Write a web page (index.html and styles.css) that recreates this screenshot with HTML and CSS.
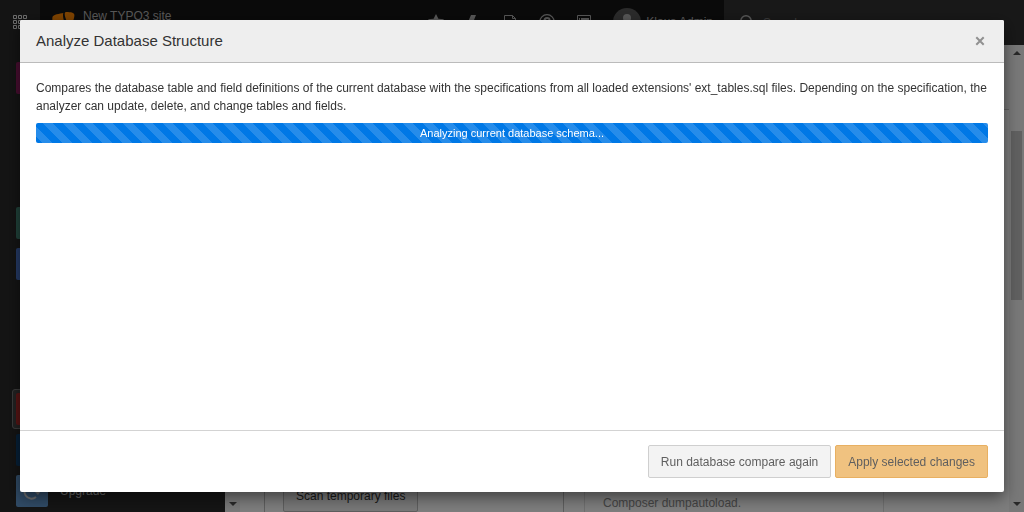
FILE: index.html
```html
<!DOCTYPE html>
<html lang="en">
<head>
<meta charset="utf-8">
<meta name="viewport" content="width=device-width, initial-scale=1">
<title>Analyze Database Structure</title>
<link rel="stylesheet" href="styles.css">
</head>
<body>
<div class="page">
  <header class="topbar">
    <button class="topbar-toggle" type="button" aria-label="Toggle module menu">
      <svg width="16" height="16" viewBox="0 0 16 16" fill="none" stroke="currentColor"><path d="M1.5 1.5h3v3h-3zM6.500 1.500h3v3h-3zM11.500 1.500h3v3h-3zM1.500 6.500h3v3h-3zM6.500 6.500h3v3h-3zM11.500 6.500h3v3h-3zM1.500 11.500h3v3h-3zM6.500 11.500h3v3h-3zM11.500 11.500h3v3h-3z"/></svg>
    </button>
    <a class="site" href="#">
      <svg class="site-logo" width="24" height="24" viewBox="0 0 24 24" fill="#ff8700"><path d="M17 15.500c-.4.100-.7.200-1.100.200-3.300 0-4.900-9-4.900-12 0-1.100.3-1.500.6-1.700C7.600 2.400 1 4 .7 5.500.4 6.200.3 7 .3 7.800 0 11.500 5 22 9.200 22c2 0 5.200-3.200 7.800-6.500M14.500 1c3.900 0 7.900.7 7.900 2.900 0 4.300-2.700 9.600-4.200 9.600-2.500 0-5.500-6.900-5.500-10.400C12.700 1.500 13.300 1 14.500 1"/></svg>
      <span class="site-name">New TYPO3 site</span>
    </a>
    <nav class="tools">
      <button class="tool" type="button" aria-label="Bookmarks"><svg width="16" height="16" viewBox="0 0 16 16" fill="currentColor"><path d="M8 0l2.400 4.700L16 5.300l-4 4 1.100 5.700L8 12.200 2.900 15 4 9.300l-4-4 5.600-.6z"/></svg></button>
      <button class="tool" type="button" aria-label="Flush caches"><svg width="16" height="16" viewBox="0 0 16 16" fill="currentColor"><path d="M6 1h5L9 6h3l-7 9 2-7H3z"/></svg></button>
      <button class="tool" type="button" aria-label="Open documents"><svg width="16" height="16" viewBox="0 0 16 16" fill="none" stroke="currentColor"><path d="M2.500 1.500h8l3 3v10h-11zM10.500 1.500v3h3"/></svg></button>
      <button class="tool" type="button" aria-label="Help"><svg width="16" height="16" viewBox="0 0 16 16" fill="none" stroke="currentColor"><circle cx="8" cy="8" r="7.300" stroke-width="1.300"/><path d="M5.500 6.500C5.500 3 10.700 3.200 10.500 6 10.400 7.700 8 7.800 8 10M8 11.500v1.500" stroke-width="2"/></svg></button>
      <button class="tool" type="button" aria-label="Application information"><svg width="16" height="16" viewBox="0 0 16 16" fill="none" stroke="currentColor"><path d="M1.500 1.500h13v12h-13z"/><path d="M3 5h1M5 5h8M3 8h1M5 8h8M3 11h1M5 11h8" stroke-width="2"/></svg></button>
      <button class="user" type="button">
        <svg width="28" height="28" viewBox="0 0 28 28"><circle cx="14" cy="14" r="14" fill="#575757"/><circle cx="14" cy="10" r="4" fill="#b0b0b0"/><path d="M6 23c0-11 16-11 16 0z" fill="#b0b0b0"/></svg>
        <span>Klaus Admin</span>
      </button>
    </nav>
    <label class="search">
      <svg width="16" height="16" viewBox="0 0 16 16" fill="none" stroke="currentColor" stroke-width="1.500"><circle cx="6" cy="6" r="5.200"/><path d="M10 10l4 4"/></svg>
      <input class="search-input" type="search" placeholder="Search" aria-label="Search">
    </label>
  </header>
  <div class="scaffold">
    <nav class="modules">
      <div class="module"><span class="module-icon pink"></span></div>
      <div class="module group-start"><span class="module-icon teal"></span></div>
      <div class="module"><span class="module-icon blue"></span></div>
      <div class="module active group-start"><span class="module-icon red"></span></div>
      <div class="module"><span class="module-icon navy"></span></div>
      <a class="module" href="#"><span class="module-icon steel"><svg width="32" height="32" viewBox="0 0 32 32" fill="none" stroke="#dddddd" stroke-width="2"><path d="M20 22A7 7 0 1 1 22 14"/><path d="M18 16h7l-3 4z" fill="#dddddd" stroke="none"/></svg></span><span>Upgrade</span></a>
    </nav>
    <div class="scrollbar nav-scroll"><span class="arrow-down"></span></div>
    <main class="content">
      <div class="docheader"></div>
      <div class="cards">
        <section class="card"><button class="card-button" type="button">Scan temporary files</button></section>
        <section class="card muted"><p class="card-text">Composer dumpautoload.</p></section>
      </div>
    </main>
    <div class="scrollbar"><span class="arrow-up"></span><span class="thumb"></span><span class="arrow-down"></span></div>
  </div>
</div>
<div class="backdrop">
  <div class="modal" role="dialog" aria-modal="true" aria-labelledby="modal-title">
    <header class="modal-header">
      <h1 class="modal-title" id="modal-title">Analyze Database Structure</h1>
      <button class="close" type="button" aria-label="Close"><svg width="10" height="10" viewBox="0 0 10 10" stroke="currentColor" stroke-width="2"><path d="M1.300 1.300l7.400 7.400M8.700 1.300L1.300 8.700"/></svg></button>
    </header>
    <div class="modal-body">
      <p class="intro">Compares the database table and field definitions of the current database with the specifications from all loaded extensions' ext_tables.sql files. Depending on the specification, the analyzer can update, delete, and change tables and fields.</p>
      <div class="progress" role="progressbar" aria-label="Analyzing">Analyzing current database schema...</div>
    </div>
    <footer class="modal-footer">
      <button class="btn" type="button" disabled>Run database compare again</button>
      <button class="btn btn-warning" type="button" disabled>Apply selected changes</button>
    </footer>
  </div>
</div>
</body>
</html>
```

FILE: styles.css
```css
* { box-sizing: border-box; }
body {
  margin: 0;
  overflow: hidden;
  font: 12px/18px "Liberation Sans", Arial, sans-serif;
  color: #333333;
}
button, input { font: inherit; color: inherit; border: 0; padding: 0; background: none; }
a { color: inherit; text-decoration: none; }
svg { display: block; flex: none; }

.page { height: 100vh; display: flex; flex-direction: column; overflow: hidden; }
.topbar { display: flex; flex: none; height: 45px; background: #151515; color: #b0b0b0; }
.topbar-toggle { width: 40px; padding-bottom: 1px; background: #292929; display: grid; place-items: center; color: #dddddd; }
.site { display: flex; flex: 1; padding: 7px 0 0 12px; gap: 7px; }
.site-logo { margin-top: 4px; }
.tools { display: flex; padding-bottom: 1px; }
.tool { width: 37px; display: grid; place-items: center; }
.user { display: flex; align-items: center; gap: 5px; padding: 0 11px; }
.search { display: flex; align-items: center; gap: 7px; width: 300px; padding-left: 16px; background: #313131; }
.search-input { width: 120px; }
.search-input::placeholder { color: #757575; }

.scaffold { display: flex; flex: 1; min-height: 0; }
.modules { width: 225px; flex: none; padding: 13px 12px 0; display: flex; flex-direction: column; gap: 1px; background: #292929; color: #cccccc; }
.module { flex: none; height: 40px; padding: 3px; border: 1px solid transparent; border-radius: 3px; display: flex; align-items: center; gap: 12px; }
.module.active { background: #444444; border-color: #777777; }
.group-start { margin-top: 104px; }
.module-icon { width: 32px; height: 32px; border-radius: 2px; }
.pink { background: #911c61; }
.teal { background: #428575; }
.blue { background: #4a76cc; }
.red { background: #b02a29; }
.navy { background: #0e4170; }
.steel { background: #6196cc; }

.scrollbar { width: 15px; flex: none; display: flex; flex-direction: column; align-items: center; padding: 6px 0; background: #f1f1f1; }
.nav-scroll { justify-content: flex-end; }
.arrow-up, .arrow-down { border: 4px solid transparent; }
.arrow-up { border-top: 0; border-bottom-color: #505050; }
.arrow-down { border-bottom: 0; border-top-color: #505050; margin-top: auto; }
.thumb { width: 11px; height: 169px; margin-top: 76px; background: #c1c1c1; }
.content { flex: 1; min-width: 0; display: flex; flex-direction: column; justify-content: space-between; background: #fafafa; }
.docheader { height: 65px; background: #eeeeee; border-bottom: 1px solid #c3c3c3; }
.cards { display: flex; gap: 20px; padding: 0 24px; }
.card { width: 300px; height: 70px; padding: 0 18px; border: solid #bbbbbb; border-width: 0 1px; display: flex; align-items: flex-end; }
.card.muted { border-color: #dddddd; }
.card-button { height: 32px; padding: 0 12px; background: #eeeeee; border: 1px solid #bbbbbb; border-radius: 2px; }
.card-text { margin: 0; color: #888888; }

.backdrop { position: fixed; inset: 0; padding: 20px; background: rgba(0, 0, 0, .5); }
.modal { height: 100%; display: flex; flex-direction: column; background: #ffffff; border-radius: 2px; box-shadow: 0 5px 15px rgba(0, 0, 0, .5); overflow: hidden; }
.modal-header { display: flex; align-items: center; justify-content: space-between; height: 43px; padding: 0 19px 0 16px; background: #eeeeee; border-bottom: 1px solid #bbbbbb; }
.modal-title { margin: 0; font-size: 15px; line-height: 20px; font-weight: normal; }
.close { color: #909090; }
.modal-body { flex: 1; padding: 16px; }
.intro { margin: 0 0 8px; }
.progress {
  height: 20px;
  line-height: 20px;
  font-size: 11px;
  text-align: center;
  color: #ffffff;
  border-radius: 2px;
  background: #0078e6 linear-gradient(45deg, rgba(255, 255, 255, .15) 25%, transparent 25%, transparent 50%, rgba(255, 255, 255, .15) 50%, rgba(255, 255, 255, .15) 75%, transparent 75%) 7px 0 / 20px 20px;
}
.modal-footer { display: flex; justify-content: flex-end; gap: 4px; padding: 14px 16px; border-top: 1px solid #d3d3d3; }
.btn { height: 33px; padding: 0 12px; background: #f3f3f3; border: 1px solid #cfcfcf; border-radius: 2px; color: #5f5f5f; }
.btn-warning { background: #f0c280; border-color: #e8b062; }
```
